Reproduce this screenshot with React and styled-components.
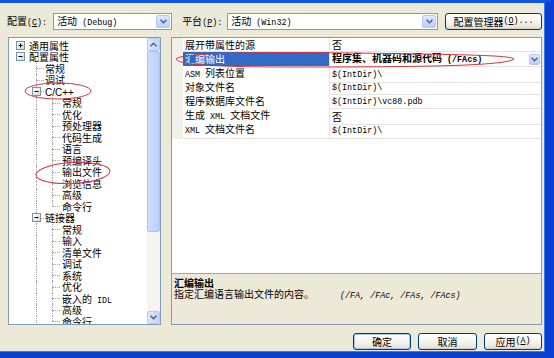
import React from 'react';
import styled, { createGlobalStyle } from 'styled-components';

const GlobalStyle = createGlobalStyle`
  html, body { margin: 0; padding: 0; background: #ece9d8; }
  body {
    font-family: "Noto Sans CJK SC", "Noto Sans", sans-serif;
    font-size: 10px;
    line-height: 11px;
    color: #000;
  }
`;

// latin runs are drawn narrower, half the width of a CJK char like SimSun does
const Lat = styled.span`
  font-family: ${p => (p.$sans ? '"Liberation Sans", sans-serif' : '"Liberation Mono", monospace')};
  font-size: ${p => (p.$sans ? 10 : 8.4)}px;
`;

const T = ({ children, sans }) =>
  String(children)
    .split(/([\x20-\x7e]+)/)
    .map((s, i) =>
      s === '' ? null : /[\x20-\x7e]/.test(s[0]) ? (
        <Lat key={i} $sans={sans}>
          {s}
        </Lat>
      ) : (
        <React.Fragment key={i}>{s}</React.Fragment>
      )
    );

const Root = styled.div`
  position: relative;
  width: 554px;
  height: 358px;
  overflow: hidden;
`;

const Frame = styled.div`
  width: 554px;
  height: 358px;
  box-sizing: border-box;
  border-top: 3px solid #0c55e6;
  border-right: 9px solid #0a3fd2;
  border-bottom: 6px solid #0a3fd2;
  box-shadow: inset -1px 0 0 #3d78f0, inset 0 -1px 0 #3d78f0;
  background: #ece9d8;
  padding: 10px 3px 0 7px;
  display: flex;
  flex-direction: column;
`;

const TopBar = styled.div`
  display: flex;
  align-items: center;
  height: 17px;
`;

const FieldLabel = styled.span`
  white-space: nowrap;
  margin-left: ${p => p.$ml || 0}px;
`;

const Combo = styled.div`
  width: ${p => p.$w}px;
  height: 17px;
  box-sizing: border-box;
  margin-left: ${p => p.$ml}px;
  border: 1px solid #7f9db9;
  background: #fff;
  display: flex;
  align-items: center;
  justify-content: space-between;
  padding-left: 3px;
`;

const DropBtn = styled.span`
  width: ${p => p.$w || 14}px;
  height: ${p => p.$h || 13}px;
  margin: 1px;
  box-sizing: border-box;
  border: 1px solid #b6c8f3;
  border-radius: 2px;
  background: linear-gradient(#dfe8fd, #bccefa);
  display: flex;
  align-items: center;
  justify-content: center;
  flex: none;
`;

const Chevron = ({ up }) => (
  <svg width="7" height="5" viewBox="0 0 7 5">
    <path
      d={up ? 'M0.5 4.3L3.5 1.3L6.5 4.3' : 'M0.5 0.7L3.5 3.7L6.5 0.7'}
      fill="none"
      stroke="#4d6185"
      strokeWidth="1.6"
    />
  </svg>
);

const ActionButton = styled.div`
  width: ${p => p.$w}px;
  height: 17px;
  box-sizing: border-box;
  margin-left: ${p => (p.$push ? 'auto' : '0')};
  border: 1px solid #003c74;
  border-radius: 3px;
  background: linear-gradient(#ffffff, #f3f2ec 60%, #e2ddd0);
  box-shadow: ${p => (p.$default ? 'inset 0 0 0 1px #a9c4ef' : 'inset 0 -1px 0 #d6d0c5')};
  display: flex;
  align-items: center;
  justify-content: center;
  white-space: nowrap;
`;

const Main = styled.div`
  display: flex;
  margin-top: 7px;
  height: 288px;
`;

const TreeBox = styled.div`
  width: 153px;
  margin-left: 1px;
  box-sizing: border-box;
  border: 1px solid #7f9db9;
  background: #fff;
  display: flex;
`;

const TreeList = styled.div`
  flex: 1;
  overflow: hidden;
  padding: 1.5px 0 0 3px;
`;

const TreeRow = styled.div`
  display: flex;
  align-items: stretch;
  height: 11.5px;
  line-height: 11.5px;
`;

const Cell = styled.span`
  position: relative;
  flex: none;
  width: 16px;
  &::before {
    content: '';
    display: ${p => (p.$v ? 'block' : 'none')};
    position: absolute;
    left: 8px;
    top: 0;
    bottom: ${p => (p.$v === 'top' ? '50%' : '0')};
    border-left: 1px dotted #a5a5a5;
  }
  &::after {
    content: '';
    display: ${p => (p.$h ? 'block' : 'none')};
    position: absolute;
    left: 8px;
    right: 0;
    top: 50%;
    border-top: 1px dotted #a5a5a5;
  }
`;

const Expander = styled.span`
  position: absolute;
  z-index: 1;
  left: 4px;
  top: 1px;
  width: 9px;
  height: 9px;
  box-sizing: border-box;
  border: 1px solid #7a94b0;
  background: linear-gradient(135deg, #ffffff, #dcd8c9);
  display: flex;
  align-items: center;
  justify-content: center;
`;

const TreeLabel = styled.span`
  white-space: nowrap;
  padding-left: ${p => (p.$lv === 2 ? 2 : 1)}px;
`;

const ScrollBar = styled.div`
  width: 13px;
  display: flex;
  flex-direction: column;
  background: #f5f4ee;
`;

const ScrollBtn = styled.div`
  height: 13px;
  box-sizing: border-box;
  border: 1px solid #b7c9f4;
  border-radius: 2px;
  background: linear-gradient(90deg, #dce6fd, #c2d3fb);
  display: flex;
  align-items: center;
  justify-content: center;
`;

const Thumb = styled.div`
  height: 181px;
  box-sizing: border-box;
  border: 1px solid #aec3f2;
  border-radius: 2px;
  background: linear-gradient(90deg, #cfdcfd, #bccdf8);
`;

const Track = styled.div`
  flex: 1;
`;

const Panel = styled.div`
  width: 371px;
  margin-left: 10px;
  box-sizing: border-box;
  border: 1px solid #8c9aa8;
  display: flex;
  flex-direction: column;
`;

const Grid = styled.div`
  height: 236px;
  box-sizing: border-box;
  background: #fff;
  border-bottom: 1px solid #a8a596;
`;

const PropRow = styled.div`
  display: grid;
  grid-template-columns: 11px 147px 1fr;
  height: 14px;
`;

const Gutter = styled.span`
  background: #f2f1ea;
`;

const NameCell = styled.span`
  padding-left: 2px;
  line-height: 13px;
  white-space: nowrap;
  border-right: 1px solid #e6e4dc;
  border-bottom: 1px solid #e6e4dc;
  background: ${p => (p.$selected ? '#316ac5' : '#fff')};
  color: ${p => (p.$selected ? '#fff' : '#000')};
`;

const ValueCell = styled.span`
  display: flex;
  align-items: center;
  justify-content: space-between;
  padding-left: 2px;
  white-space: nowrap;
  font-weight: ${p => (p.$bold ? 'bold' : 'normal')};
  border-bottom: 1px solid #e6e4dc;
`;

const Description = styled.div`
  flex: 1;
  padding: 3px 2px;
  background: #ece9d8;
`;

const DescTitle = styled.div`
  font-weight: bold;
`;

const Options = styled.span`
  margin-left: 26px;
  font-style: italic;
`;

const ButtonBar = styled.div`
  display: flex;
  justify-content: flex-end;
  gap: 7px;
  margin-top: 8px;
`;

const Marks = styled.svg`
  position: absolute;
  left: 0;
  top: 0;
  pointer-events: none;
`;

const tree = [
  { t: '通用属性', lv: 0, box: '+' },
  { t: '配置属性', lv: 0, box: '-' },
  { t: '常规', lv: 1 },
  { t: '调试', lv: 1 },
  { t: 'C/C++', lv: 1, box: '-', sans: true },
  { t: '常规', lv: 2 },
  { t: '优化', lv: 2 },
  { t: '预处理器', lv: 2 },
  { t: '代码生成', lv: 2 },
  { t: '语言', lv: 2 },
  { t: '预编译头', lv: 2 },
  { t: '输出文件', lv: 2 },
  { t: '浏览信息', lv: 2 },
  { t: '高级', lv: 2 },
  { t: '命令行', lv: 2, last: true },
  { t: '链接器', lv: 1, box: '-' },
  { t: '常规', lv: 2 },
  { t: '输入', lv: 2 },
  { t: '清单文件', lv: 2 },
  { t: '调试', lv: 2 },
  { t: '系统', lv: 2 },
  { t: '优化', lv: 2 },
  { t: '嵌入的 IDL', lv: 2 },
  { t: '高级', lv: 2 },
  { t: '命令行', lv: 2, last: true },
];

const props = [
  { name: '展开带属性的源', value: '否' },
  { name: '汇编输出', value: '程序集、机器码和源代码 (/FAcs)', selected: true },
  { name: 'ASM 列表位置', value: '$(IntDir)\\' },
  { name: '对象文件名', value: '$(IntDir)\\' },
  { name: '程序数据库文件名', value: '$(IntDir)\\vc80.pdb' },
  { name: '生成 XML 文档文件', value: '否' },
  { name: 'XML 文档文件名', value: '$(IntDir)\\' },
];

const Sign = ({ plus }) => (
  <svg width="7" height="7" viewBox="0 0 7 7">
    <path d="M1.5 3.5H5.5" stroke="#000" strokeWidth="1" />
    {plus && <path d="M3.5 1.5V5.5" stroke="#000" strokeWidth="1" />}
  </svg>
);

const TreeItem = ({ item }) => {
  const cells = [];
  for (let i = 0; i <= item.lv; i++) {
    if (i < item.lv) {
      cells.push(<Cell key={i} $v={i === 1 ? 'full' : null} />);
    } else {
      const lined = item.lv > 0;
      cells.push(
        <Cell key={i} $v={lined ? (item.last ? 'top' : 'full') : null} $h={lined}>
          {item.box && (
            <Expander>
              <Sign plus={item.box === '+'} />
            </Expander>
          )}
        </Cell>
      );
    }
  }
  return (
    <TreeRow>
      {cells}
      <TreeLabel $lv={item.lv}>
        <T sans={item.sans}>{item.t}</T>
      </TreeLabel>
    </TreeRow>
  );
};

export default function App() {
  return (
    <Root>
      <GlobalStyle />
      <Frame>
        <TopBar>
          <FieldLabel>
            配置<Lat>(<u>C</u>):</Lat>
          </FieldLabel>
          <Combo $w={119} $ml={6}>
            <span>
              <T>活动 (Debug)</T>
            </span>
            <DropBtn>
              <Chevron />
            </DropBtn>
          </Combo>
          <FieldLabel $ml={10}>
            平台<Lat>(<u>P</u>):</Lat>
          </FieldLabel>
          <Combo $w={211} $ml={5}>
            <span>
              <T>活动 (Win32)</T>
            </span>
            <DropBtn>
              <Chevron />
            </DropBtn>
          </Combo>
          <ActionButton $w={97} $push>
            配置管理器<Lat>(<u>O</u>)...</Lat>
          </ActionButton>
        </TopBar>

        <Main>
          <TreeBox>
            <TreeList>
              {tree.map((item, i) => (
                <TreeItem key={i} item={item} />
              ))}
            </TreeList>
            <ScrollBar>
              <ScrollBtn>
                <Chevron up />
              </ScrollBtn>
              <Thumb />
              <Track />
              <ScrollBtn>
                <Chevron />
              </ScrollBtn>
            </ScrollBar>
          </TreeBox>

          <Panel>
            <Grid>
              {props.map((p, i) => (
                <PropRow key={i}>
                  <Gutter />
                  <NameCell $selected={p.selected}>
                    <T>{p.name}</T>
                  </NameCell>
                  <ValueCell $bold={p.selected}>
                    <span>
                      <T>{p.value}</T>
                    </span>
                    {p.selected && (
                      <DropBtn $w={11} $h={11}>
                        <Chevron />
                      </DropBtn>
                    )}
                  </ValueCell>
                </PropRow>
              ))}
            </Grid>
            <Description>
              <DescTitle>汇编输出</DescTitle>
              <div>
                指定汇编语言输出文件的内容。
                <Options>
                  <Lat>(/FA, /FAc, /FAs, /FAcs)</Lat>
                </Options>
              </div>
            </Description>
          </Panel>
        </Main>

        <ButtonBar>
          <ActionButton $w={58} $default>
            确定
          </ActionButton>
          <ActionButton $w={59}>取消</ActionButton>
          <ActionButton $w={58}>
            应用<Lat>(<u>A</u>)</Lat>
          </ActionButton>
        </ButtonBar>
      </Frame>

      {/* red hand-drawn marks over the screenshot */}
      <Marks width="554" height="358" viewBox="0 0 554 358">
        <g fill="none" stroke="#d6323e" strokeWidth="1">
          <path d="M176 59 C 182 51, 300 52, 420 54 C 480 55, 512 56, 514 59 C 505 66, 420 67, 300 67 C 230 67, 180 66, 176 59 Z" />
          <ellipse cx="58" cy="91" rx="33" ry="8" />
          <ellipse cx="73" cy="173" rx="37" ry="10.5" transform="rotate(-3 73 173)" />
        </g>
      </Marks>
    </Root>
  );
}
